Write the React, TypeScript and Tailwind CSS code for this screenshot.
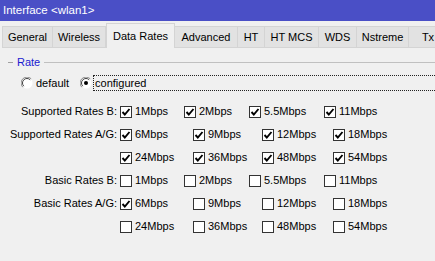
import React from 'react'

const tabs = [
  { name: 'General', w: 'w-[51px]' },
  { name: 'Wireless', w: 'w-[54px]' },
  { name: 'Data Rates', w: 'w-[69px]', active: true },
  { name: 'Advanced', w: 'w-[64px]' },
  { name: 'HT', w: 'w-[28px]' },
  { name: 'HT MCS', w: 'w-[55px]' },
  { name: 'WDS', w: 'w-[39px]' },
  { name: 'Nstreme', w: 'w-[53px]' },
  { name: 'Tx', w: 'w-[40px]' },
]

const bCells = ['w-[64px]', 'w-[65px]', 'w-[75px]', 'w-[80px]']
const agCells = ['w-[73px]', 'w-[69px]', 'w-[71px]', 'w-[80px]']

type Row = { label: string; cells: string[]; items: [string, boolean][] }

const rows: Row[] = [
  {
    label: 'Supported Rates B:',
    cells: bCells,
    items: [['1Mbps', true], ['2Mbps', true], ['5.5Mbps', true], ['11Mbps', true]],
  },
  {
    label: 'Supported Rates A/G:',
    cells: agCells,
    items: [['6Mbps', true], ['9Mbps', true], ['12Mbps', true], ['18Mbps', true]],
  },
  {
    label: '',
    cells: agCells,
    items: [['24Mbps', true], ['36Mbps', true], ['48Mbps', true], ['54Mbps', true]],
  },
  {
    label: 'Basic Rates B:',
    cells: bCells,
    items: [['1Mbps', false], ['2Mbps', false], ['5.5Mbps', false], ['11Mbps', false]],
  },
  {
    label: 'Basic Rates A/G:',
    cells: agCells,
    items: [['6Mbps', true], ['9Mbps', false], ['12Mbps', false], ['18Mbps', false]],
  },
  {
    label: '',
    cells: agCells,
    items: [['24Mbps', false], ['36Mbps', false], ['48Mbps', false], ['54Mbps', false]],
  },
]

const Check = ({ on }: { on: boolean }) => (
  <span className="w-[12px] h-[12px] border border-[#333333] bg-white flex items-center justify-center shrink-0">
    {on && (
      <svg width="10" height="10" viewBox="0 0 10 10">
        <polyline points="1.5,5 3.8,7.5 8.5,2" fill="none" stroke="#000" strokeWidth="1.9" />
      </svg>
    )}
  </span>
)

const Radio = ({ on }: { on: boolean }) => (
  <svg width="12" height="12" viewBox="0 0 12 12" className="shrink-0">
    <circle cx="6" cy="6" r="5.5" fill="#fff" />
    <path d="M10.2 1.8 A5.5 5.5 0 0 0 1.8 10.2" fill="none" stroke="#8a8a8a" strokeWidth="1" />
    <path d="M9.2 2.8 A4.5 4.5 0 0 0 2.8 9.2" fill="none" stroke="#404040" strokeWidth="1" />
    {on && <circle cx="6" cy="6" r="2" fill="#000" />}
  </svg>
)

const App = () => {
  return (
    <div
      className="w-[435px] h-[261px] bg-[#f0f0f0] overflow-hidden text-[11px] text-black"
      style={{ fontFamily: '"Liberation Sans", Arial, sans-serif' }}
    >
      <div className="h-[21px] bg-[#4a4fc6] text-white pl-[3px] flex items-center text-[11.5px]">
        Interface &lt;wlan1&gt;
      </div>

      <div className="h-[27px] flex items-end pl-[2px] whitespace-nowrap">
        {tabs.map((t) =>
          t.active ? (
            <div
              key={t.name}
              className={`${t.w} h-[25px] shrink-0 bg-[#f0f0f0] border border-b-0 border-[#d4d4d4] flex items-center justify-center`}
            >
              {t.name}
            </div>
          ) : (
            <div
              key={t.name}
              className={`${t.w} h-[22px] shrink-0 bg-[#e2e2e2] border border-[#d4d4d4] -ml-px first:ml-0 flex items-center justify-center`}
            >
              {t.name}
            </div>
          )
        )}
      </div>

      <div className="h-[14px] mt-[7px] flex items-center">
        <span className="ml-[8px] w-[5px] h-px bg-[#a0a0a0]" />
        <span className="px-[4px] text-[#1a1ad0]">Rate</span>
        <span className="flex-1 h-px bg-[#c0c0c0]" />
      </div>

      <div className="h-[16px] mt-[6px] flex items-center">
        <span className="ml-[21px]">
          <Radio on={false} />
        </span>
        <span className="ml-[3px]">default</span>
        <span className="ml-[11px]">
          <Radio on={true} />
        </span>
        <span className="ml-px flex-1 h-[16px] border border-dotted border-[#222] border-r-0 flex items-center pl-px">
          configured
        </span>
      </div>

      <div className="mt-[9px] flex flex-col">
        {rows.map((r, i) => (
          <div key={i} className="h-[23px] flex items-center">
            <span className="w-[118px] text-right pr-px shrink-0">{r.label}</span>
            <div className="flex ml-[2px]">
              {r.items.map(([txt, on], j) => (
                <div key={j} className={`${r.cells[j]} flex items-center shrink-0`}>
                  <Check on={on} />
                  <span className="ml-[3px]">{txt}</span>
                </div>
              ))}
            </div>
          </div>
        ))}
      </div>
    </div>
  )
}

export default App
